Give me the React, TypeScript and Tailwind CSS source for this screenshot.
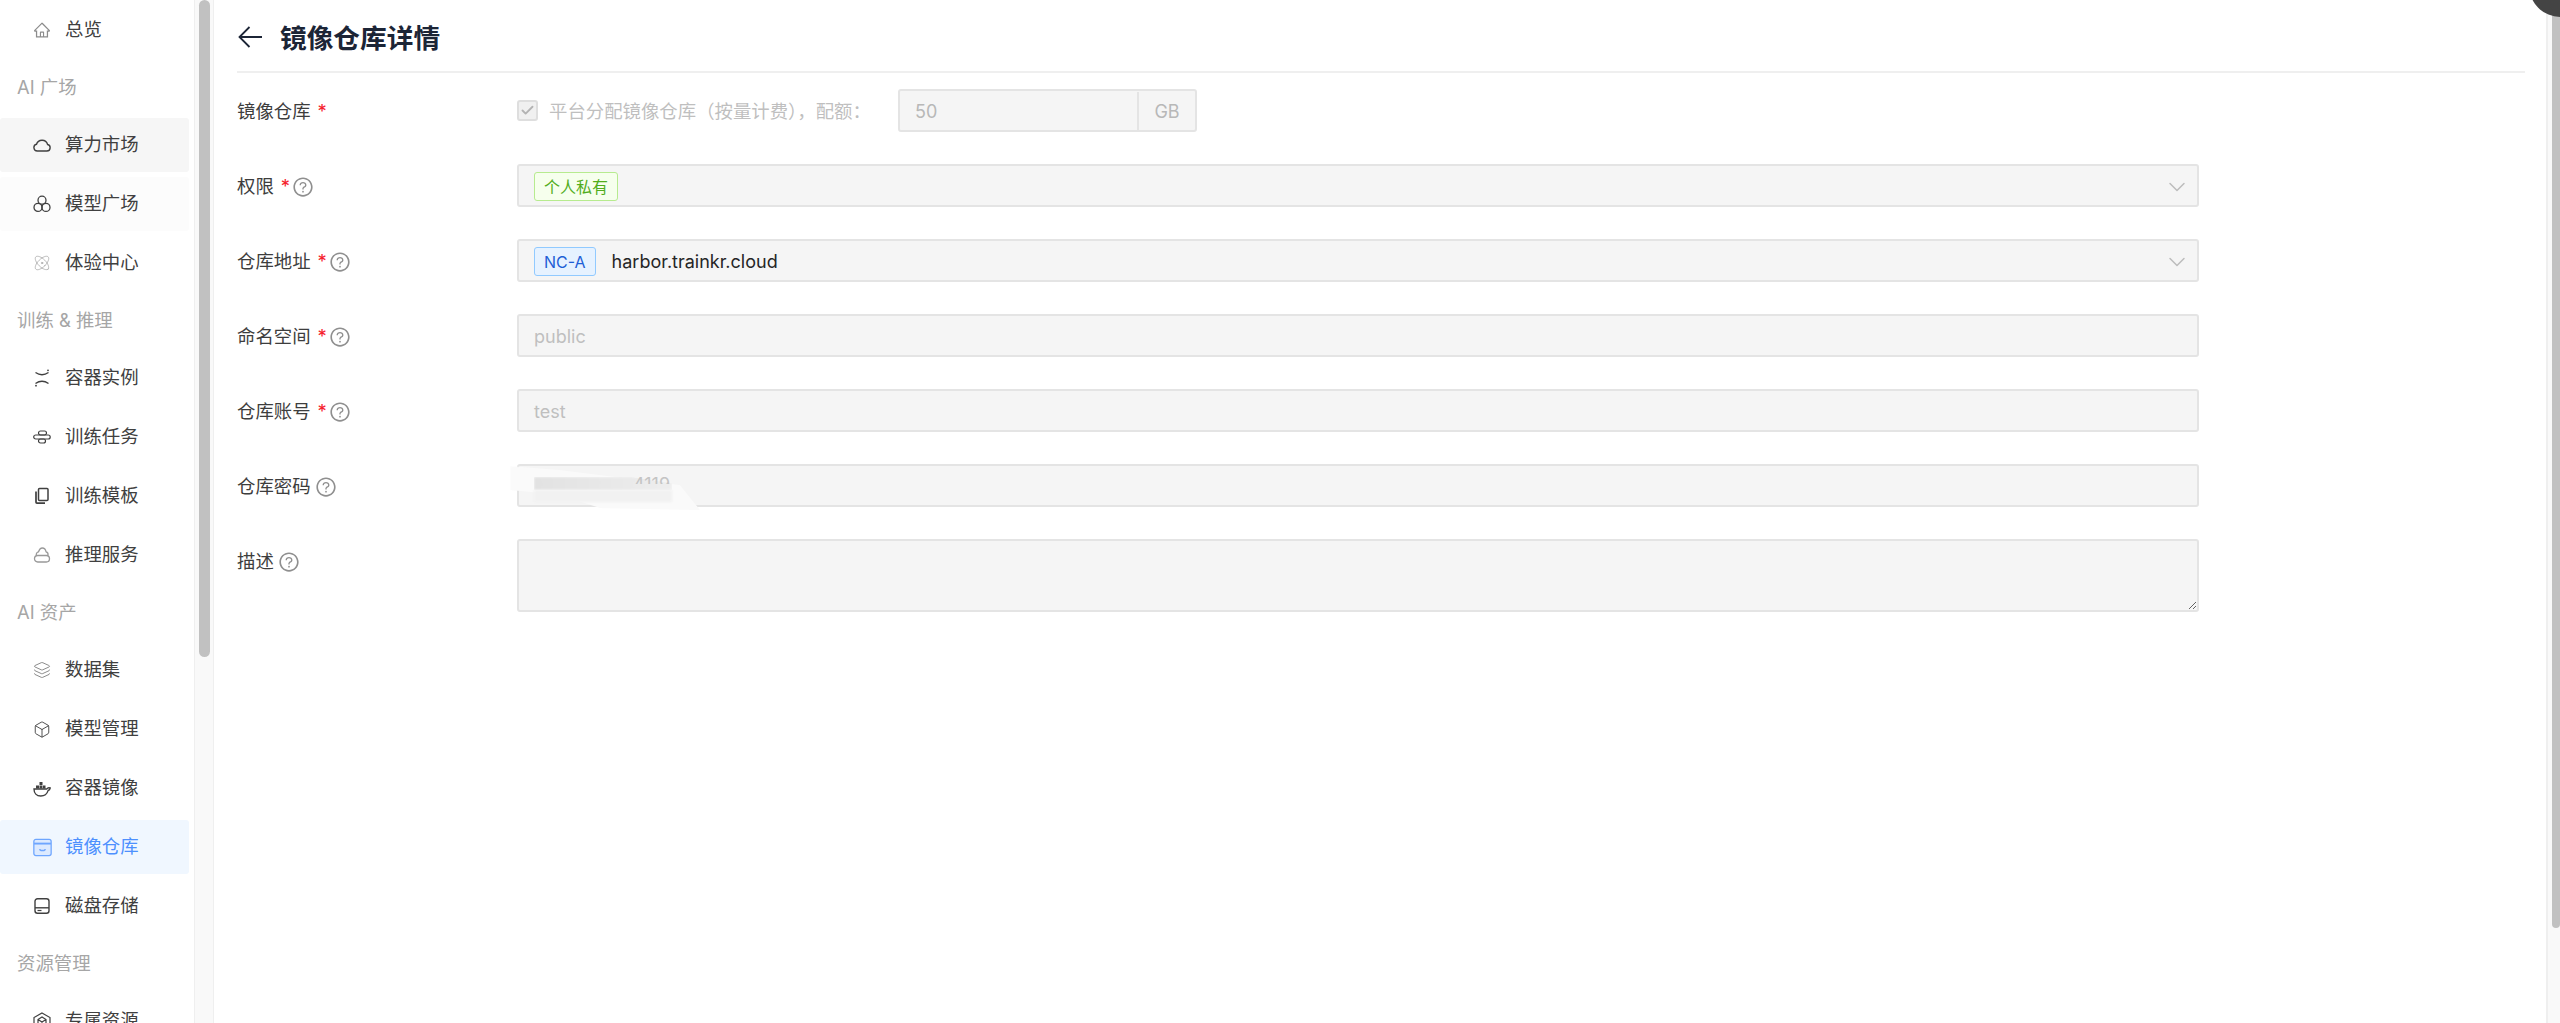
import { AiOutlineQuestionCircle, AiOutlineHome } from "react-icons/ai";
import { Atom, Box, Check, ChevronDown, Layers } from "lucide-react";
import type { ReactNode } from "react";

const font = "font-['Inter','Noto_Sans_CJK_SC',sans-serif]";

function CloudIcon() {
  return (
    <svg viewBox="0 0 18 18" className="w-[19px] h-[19px]" fill="none" stroke="currentColor" strokeWidth="1.4">
      <path d="M4.300 14.500h9.600a3.300 3.300 0 0 0 .7-6.500 5.800 5.800 0 0 0-11.100-.2 3.400 3.400 0 0 0 .8 6.700Z" />
    </svg>
  );
}

function ThreeCircles() {
  return (
    <svg viewBox="0 0 18 18" className="w-[18px] h-[18px]" fill="none" stroke="currentColor" strokeWidth="1.3">
      <circle cx="9" cy="5.200" r="4" />
      <circle cx="5" cy="12.400" r="4" />
      <circle cx="13" cy="12.400" r="4" />
    </svg>
  );
}

function ContainerIcon() {
  return (
    <svg viewBox="0 0 18 18" className="w-[18px] h-[18px]" fill="none" stroke="currentColor" strokeWidth="1.4">
      <path d="M2.500 3.500Q9 8 15.500 3.500" />
      <path d="M2.500 14.500Q9 10 15.500 14.500" />
      <circle cx="15" cy="1.300" r="0.900" fill="currentColor" stroke="none" />
      <circle cx="3" cy="16.700" r="0.900" fill="currentColor" stroke="none" />
    </svg>
  );
}

function TaskIcon() {
  return (
    <svg viewBox="0 0 18 18" className="w-[19px] h-[19px]" fill="none" stroke="currentColor" strokeWidth="1.200">
      <rect x="5.500" y="2.500" width="8" height="4" rx="2" />
      <rect x="0.700" y="6.500" width="16.500" height="4" rx="2" />
      <rect x="5.500" y="10.500" width="7" height="4" rx="2" />
    </svg>
  );
}

function TemplateIcon() {
  return (
    <svg viewBox="0 0 18 18" className="w-[18px] h-[18px]" fill="none" stroke="currentColor" strokeWidth="1.500">
      <rect x="5.500" y="1.500" width="9.500" height="12" rx="1" />
      <path d="M3 4.500v10.800c0 .5.400.9.900.9h8.100" strokeWidth="1.700" />
    </svg>
  );
}

function InferIcon() {
  return (
    <svg viewBox="0 0 18 18" className="w-[18px] h-[18px]" fill="none" stroke="currentColor" strokeWidth="1.300">
      <path d="M3.300 9.500C3 7.500 4 6 5.500 5.800 6.300 3.500 7.500 2 9.300 2c2 0 3.300 1.600 3.800 3.800 1.500.4 2.200 2 1.800 3.700" />
      <rect x="1.500" y="9.500" width="15" height="6.500" rx="3.200" />
    </svg>
  );
}

function WhaleIcon() {
  return (
    <svg viewBox="0 0 18 18" className="w-[19px] h-[19px]" fill="none" stroke="currentColor" strokeWidth="1.400">
      <path d="M1 9.500h12.800c.6-1 2-1.500 3.400-1-.3 1.500-1.200 2.300-2.100 2.600-1 3-3.500 5.400-7.300 5.400C3.500 16.500 1 13.500 1 9.500Z" />
      <g fill="currentColor" stroke="none">
        <rect x="3" y="6" width="3" height="3" />
        <rect x="6.500" y="6" width="3" height="3" />
        <rect x="6.500" y="2.500" width="3" height="3" />
        <rect x="10" y="6" width="2.500" height="3" />
      </g>
    </svg>
  );
}

function RepoIcon() {
  return (
    <svg viewBox="0 0 18 18" className="w-[19px] h-[19px]" fill="none" stroke="currentColor" strokeWidth="1.200">
      <rect x="0.800" y="1.300" width="16.400" height="15.400" rx="2" fill="#dceaff" />
      <path d="M1 5.300h16" strokeWidth="1.800" />
      <path d="M6.500 10.500c0 1 .5 1.300 1 1.300h3c.5 0 1-.3 1-1.300" strokeWidth="1.400" />
    </svg>
  );
}

function DiskIcon() {
  return (
    <svg viewBox="0 0 18 18" className="w-[18px] h-[18px]" fill="none" stroke="currentColor" strokeWidth="1.400">
      <rect x="2" y="1.800" width="14" height="14.400" rx="2.500" />
      <path d="M2 10.800h14" />
      <path d="M4.500 13.500h4" strokeWidth="1.200" />
    </svg>
  );
}

function OwnedIcon() {
  return (
    <svg viewBox="0 0 18 18" className="w-[18px] h-[18px]" fill="none" stroke="currentColor" strokeWidth="1.200">
      <path d="M9 1 17 5.500v9L9 18l-8-3.500v-9Z" />
      <path d="M5 7.500 9 5l4 2.500v5L9 15l-4-2.500ZM5 7.500l4 2.500 4-2.500M9 10v5" />
    </svg>
  );
}

const groups: { title?: string; items: { icon: ReactNode; label: string; className?: string }[] }[] = [
  { items: [{ icon: <AiOutlineHome size={22} className="text-[#8c8c8c]" />, label: "总览" }] },
  {
    title: "AI 广场",
    items: [
      { icon: <CloudIcon />, label: "算力市场", className: "bg-[#f6f6f6]" },
      { icon: <ThreeCircles />, label: "模型广场", className: "bg-[#fcfcfc]" },
      { icon: <Atom size={22} strokeWidth={1} className="text-[#a3a3a3]" />, label: "体验中心" },
    ],
  },
  {
    title: "训练 & 推理",
    items: [
      { icon: <ContainerIcon />, label: "容器实例" },
      { icon: <TaskIcon />, label: "训练任务" },
      { icon: <TemplateIcon />, label: "训练模板" },
      { icon: <span className="text-[#999]"><InferIcon /></span>, label: "推理服务" },
    ],
  },
  {
    title: "AI 资产",
    items: [
      { icon: <Layers size={22} strokeWidth={1.100} className="text-[#737373]" />, label: "数据集" },
      { icon: <Box size={21} strokeWidth={1.200} />, label: "模型管理" },
      { icon: <WhaleIcon />, label: "容器镜像" },
      { icon: <span className="text-[#6ea6ff]"><RepoIcon /></span>, label: "镜像仓库", className: "bg-[#f0f7ff] !text-[#4d90fe]" },
      { icon: <DiskIcon />, label: "磁盘存储" },
    ],
  },
  { title: "资源管理", items: [{ icon: <OwnedIcon />, label: "专属资源" }] },
];

function Help() {
  return <AiOutlineQuestionCircle size={22} className="text-[#8f8f8f] ml-[4px]" />;
}

function Row({ label, required, help, children, top }: { label: string; required?: boolean; help?: boolean; children: ReactNode; top?: boolean }) {
  return (
    <div className={`flex ${top ? "items-start" : "items-center"} mb-[32px]`}>
      <div className="w-[280px] shrink-0 flex items-center h-[43px] pt-[2px] text-[18.400px] text-[#3d3d3d]">
        <span>{label}</span>
        {required && <span className="text-[#f5222d] ml-[7px] mr-[-2px]">*</span>}
        {help && <Help />}
      </div>
      {children}
    </div>
  );
}

const inputBox = "flex items-center w-[1682px] h-[43px] bg-[#f5f5f5] border-2 border-[#e4e4e4] rounded-[3px] pl-[15px] pr-[6px] pt-[2px] text-[18px]";

export default function App() {
  return (
    <div className={`${font} h-[1023px] w-[2560px] flex overflow-hidden bg-white relative`}>
      <aside className="w-[194px] shrink-0 h-full overflow-hidden flex flex-col pt-[3px]">
        {groups.map((group, i) => (
          <div key={i}>
            {group.title && (
              <div className="h-[61px] pl-[17px] flex items-center text-[18.400px] text-[#a6a6a6]">{group.title}</div>
            )}
            <div className="flex flex-col gap-[5px]">
              {group.items.map(item => (
                <div
                  key={item.label}
                  className={`h-[54px] shrink-0 w-[189px] rounded-[3px] flex items-center text-[18.400px] text-[#404040] ${item.className ?? ""}`}
                >
                  <span className="w-[33px] shrink-0" />
                  <span className="w-[18px] h-[20px] flex items-center justify-center shrink-0">{item.icon}</span>
                  <span className="ml-[14px]">{item.label}</span>
                </div>
              ))}
            </div>
          </div>
        ))}
      </aside>

      {/* sidebar scrollbar */}
      <div className="w-[20px] shrink-0 h-full bg-[#f9f9f9] border-x border-[#efefef] pl-[4px]">
        <div className="w-[11px] h-[657px] bg-[#c1c1c1] rounded-full" />
      </div>

      <main className="flex-1 h-full min-w-0 flex">
        <div className="flex-1 min-w-0 pl-[23px] pr-[21px]">
          <div className="h-[73px] border-b-2 border-[#efefef] flex items-center pt-[2px]">
            <svg viewBox="0 0 24 22" className="w-[24px] h-[22px] ml-[1px]" fill="none" stroke="#1c2536" strokeWidth="1.800">
              <path d="M24 11H1.500M11.500 1 1.500 11l10 10" />
            </svg>
            <h1 className="ml-[18px] pt-[3px] text-[26.700px] font-bold text-[#1c2536]">镜像仓库详情</h1>
          </div>

          <div className="pt-[16px]">
            <Row label="镜像仓库" required>
              <div className="flex items-center">
                <span className="w-[21px] h-[21px] bg-[#f0f0f0] border-2 border-[#dedede] rounded-[3px] flex items-center justify-center">
                  <Check size={15} strokeWidth={3} className="text-[#b3b3b3]" />
                </span>
                <span className="ml-[11px] w-[349px] pt-[2px] text-[18.400px] whitespace-nowrap text-[#bfbfbf]">平台分配镜像仓库（按量计费），配额：</span>
                <div className="flex w-[299px] h-[43px] bg-[#f5f5f5] border-2 border-[#e4e4e4] rounded-[3px] pt-[1px] text-[18px] text-[#b8b8b8]">
                  <span className="flex-1 flex items-center pl-[15px]">50</span>
                  <span className="w-[58px] border-l-2 border-[#e4e4e4] flex items-center justify-center">GB</span>
                </div>
              </div>
            </Row>

            <Row label="权限" required help>
              <div className={inputBox}>
                <span className="h-[29px] px-[9px] flex items-center bg-[#f6ffed] border border-[#b7eb8f] rounded-[3px] text-[16px] text-[#52ad1c]">个人私有</span>
                <ChevronDown size={28} strokeWidth={1.300} className="ml-auto text-[#bdbdbd]" />
              </div>
            </Row>

            <Row label="仓库地址" required help>
              <div className={inputBox}>
                <span className="h-[29px] px-[9px] flex items-center bg-[#e6f2ff] border border-[#91caff] rounded-[3px] text-[16px] text-[#1f5fd6]">NC-A</span>
                <span className="ml-[16px] text-[#262626]">harbor.trainkr.cloud</span>
                <ChevronDown size={28} strokeWidth={1.300} className="ml-auto text-[#bdbdbd]" />
              </div>
            </Row>

            <Row label="命名空间" required help>
              <div className={`${inputBox} text-[#bfbfbf]`}>public</div>
            </Row>

            <Row label="仓库账号" required help>
              <div className={`${inputBox} text-[#bfbfbf]`}>test</div>
            </Row>

            <Row label="仓库密码" help>
              <div className={`${inputBox} relative`}>
                {/* smudge laid over the password in the screenshot */}
                <div className="absolute left-[-9px] top-[0px] w-[200px] h-[46px] bg-[#fafafa] blur-[1px] [clip-path:polygon(0_0,50px_4px,170px_19px,190px_44px,90px_42px,50px_29px,0_24px)]" />
                <div className="absolute left-[15px] top-[11px] w-[138px] h-[13px] bg-gradient-to-r from-[#e2e2e2] to-[#eeeeee] blur-[1px] [clip-path:polygon(0_0,70%_0,100%_50%,100%_100%,0_100%)]" />
                <div className="absolute left-[15px] top-[24px] w-[138px] h-[12px] bg-[#f1f1f1] blur-[1px]" />
                <div className="absolute left-[114px] top-[10px] h-[8px] overflow-hidden leading-[18px] text-[#c4c4c4]">4119</div>
              </div>
            </Row>

            <Row label="描述" help top>
              <textarea
                disabled
                className="block w-[1682px] h-[73px] bg-[#f5f5f5] border-2 border-[#e4e4e4] rounded-[3px] resize-y"
              />
            </Row>
          </div>
        </div>

        {/* page scrollbar */}
        <div className="w-[14px] shrink-0 h-full bg-[#f9f9f9] border-l-2 border-[#efefef] pl-[4px]">
          <div className="w-[8px] h-[928px] bg-[#c1c1c1] rounded-b-[4px]" />
        </div>
      </main>

      {/* dark corner blob over the top right */}
      <div className="absolute right-[-32px] top-[-46px] w-[63px] h-[63px] rounded-full bg-[#444444]" />
    </div>
  );
}
